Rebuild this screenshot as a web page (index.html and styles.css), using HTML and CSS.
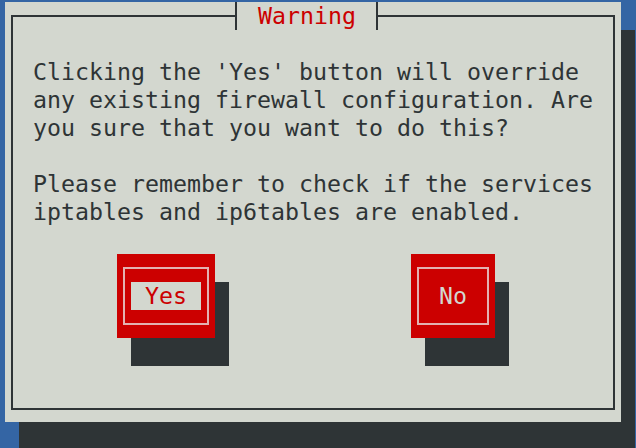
FILE: index.html
```html
<!DOCTYPE html>
<html>
<head>
<meta charset="utf-8">
<link rel="stylesheet" href="styles.css">
</head>
<body>
<div class="dialog">
  <div class="frame">
    <div class="title">Warning</div>
    <p class="msg">Clicking the 'Yes' button will override<br>any existing firewall configuration. Are<br>you sure that you want to do this?</p>
    <p class="msg">Please remember to check if the services<br>iptables and ip6tables are enabled.</p>
    <div class="buttons">
      <div class="btn btn-yes"><div class="btn-inner"><span class="label focused">Yes</span></div></div>
      <div class="btn btn-no"><div class="btn-inner"><span class="label">No</span></div></div>
    </div>
  </div>
</div>
</body>
</html>
```
FILE: styles.css
```css
html, body {
  margin: 0;
  padding: 0;
}
body {
  background: #3465a4;
  width: 636px;
  height: 448px;
  overflow: hidden;
  font-family: "DejaVu Sans Mono", "Liberation Mono", monospace;
  font-size: 23.25px;
  line-height: 28px;
  color: #2e3436;
}
.dialog {
  margin: 2px 0 0 5px;
  width: 616px;
  height: 420px;
  background: #d3d7cf;
  box-shadow: 14px 28px 0 #2e3436;
  padding: 13px 0 0 6px;
  box-sizing: border-box;
}
.frame {
  position: relative;
  width: 604px;
  height: 395px;
  border: 2px solid #2e3436;
  box-sizing: border-box;
  padding: 41px 0 0 20px;
}
.title {
  position: absolute;
  left: 222px;
  top: -15px;
  width: 143px;
  height: 28px;
  box-sizing: border-box;
  border-left: 2px solid #2e3436;
  border-right: 2px solid #2e3436;
  background: #d3d7cf;
  color: #cc0000;
  text-align: center;
  padding-left: 1px;
  white-space: pre;
}
.msg {
  margin: 0 0 28px 0;
  white-space: nowrap;
}
.buttons {
  display: flex;
  gap: 196px;
  margin-left: 84px;
}
.btn {
  background: #cc0000;
  height: 84px;
  box-sizing: border-box;
  padding: 13px 6px;
  box-shadow: 14px 28px 0 #2e3436;
}
.btn-yes { width: 98px; }
.btn-no { width: 84px; }
.btn-inner {
  height: 100%;
  box-sizing: border-box;
  border: 2px solid #e3b1b1;
  display: flex;
  align-items: center;
  justify-content: center;
}
.label {
  display: block;
  padding: 0 14px;
  height: 28px;
  color: #d3d7cf;
  white-space: pre;
}
.label.focused {
  background: #d3d7cf;
  color: #cc0000;
}
```
